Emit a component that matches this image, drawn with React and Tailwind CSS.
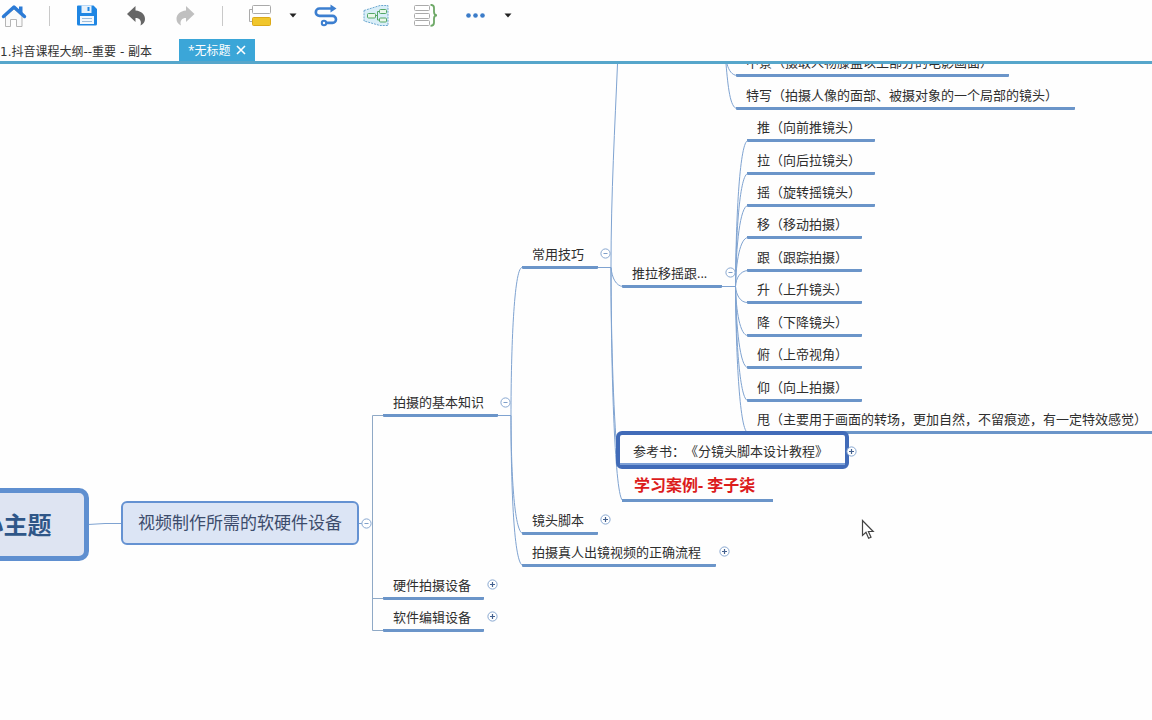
import React from "react";

// Branch nodes: x / line / width describe the underline each label sits on
const nodes = [
  { text: "中景（摄取人物膝盖以上部分的电影画面）", x: 736, line: 11, width: 273 },
  { text: "特写（拍摄人像的面部、被摄对象的一个局部的镜头）", x: 736, line: 44, width: 339 },
  { text: "推（向前推镜头）", x: 747, line: 76, width: 128 },
  { text: "拉（向后拉镜头）", x: 747, line: 109, width: 128 },
  { text: "摇（旋转摇镜头）", x: 747, line: 141, width: 128 },
  { text: "移（移动拍摄）", x: 747, line: 173, width: 115 },
  { text: "跟（跟踪拍摄）", x: 747, line: 206, width: 115 },
  { text: "升（上升镜头）", x: 747, line: 238, width: 115 },
  { text: "降（下降镜头）", x: 747, line: 271, width: 115 },
  { text: "俯（上帝视角）", x: 747, line: 303, width: 115 },
  { text: "仰（向上拍摄）", x: 747, line: 336, width: 115 },
  {
    text: "甩（主要用于画面的转场，更加自然，不留痕迹，有一定特效感觉）",
    x: 747,
    line: 368,
    width: 416,
  },
  { text: "常用技巧", x: 522, line: 203, width: 76 },
  { text: "推拉移摇跟...", x: 622, line: 222, width: 100 },
  { text: "拍摄的基本知识", x: 383, line: 351, width: 115 },
  { text: "镜头脚本", x: 522, line: 469, width: 76 },
  { text: "拍摄真人出镜视频的正确流程", x: 522, line: 501, width: 194 },
  { text: "硬件拍摄设备", x: 383, line: 534, width: 101 },
  { text: "软件编辑设备", x: 383, line: 566, width: 101 },
];

const toggles = [
  { x: 605, y: 189, open: true, label: "常用技巧" },
  { x: 730, y: 208, open: true, label: "推拉移摇跟" },
  { x: 505, y: 338, open: true, label: "拍摄的基本知识" },
  { x: 366, y: 459, open: true, label: "视频制作所需的软硬件设备" },
  { x: 851, y: 387, open: false, label: "参考书" },
  { x: 605, y: 455, open: false, label: "镜头脚本" },
  { x: 724, y: 487, open: false, label: "正确流程" },
  { x: 492, y: 520, open: false, label: "硬件拍摄设备" },
  { x: 492, y: 552, open: false, label: "软件编辑设备" },
];

// Underlines of the children of 推拉移摇跟
const shotLines = [76, 109, 141, 173, 206, 238, 271, 303, 336, 368];

function Node({ text, x, line, width }) {
  return (
    <div
      className="absolute h-[25px] pl-[10px] border-b-[3px] border-[#6b95c9] rounded-b-[1px] text-[13px] leading-5 text-[#2e2e2e] whitespace-nowrap"
      style={{ left: x, top: line - 23, width }}
    >
      {text}
    </div>
  );
}

function Toggle({ x, y, open, label }) {
  return (
    <button
      aria-label={(open ? "收起 " : "展开 ") + label}
      className="absolute size-[11px]"
      style={{ left: x - 5, top: y - 5 }}
    >
      <svg viewBox="0 0 11 11" className="block size-[11px]">
        <circle cx="5.5" cy="5.5" r="4.6" fill="#fff" stroke="#87a7d0" />
        <path
          d={open ? "M3.5 5.5h4" : "M3 5.5h5M5.5 3v5"}
          stroke={open ? "#7f9fc8" : "#44618f"}
          strokeWidth={open ? "1" : "1.2"}
        />
      </svg>
    </button>
  );
}

function Caret({ label }) {
  return (
    <button aria-label={label}>
      <svg width="10" height="24" viewBox="0 0 10 24">
        <path d="M1.5 9.5h7L5 13.5z" fill="#222" />
      </svg>
    </button>
  );
}

function Toolbar() {
  return (
    <div className="flex items-center gap-[25px] h-[39px] pb-[7px]">
      <button aria-label="主页">
        <svg width="24" height="24" viewBox="0 0 24 24" className="overflow-visible">
          <path d="M5.500 12v10.500h5v-7h6v7h5.500V12L14 5z" fill="#fafafa" stroke="#b5b5b5" />
          <path d="M19 2.500h3.500v7H19z" fill="#2c7bd6" />
          <path
            d="M3.500 12.500L14 3l10.500 9.500"
            fill="none"
            stroke="#2c7bd6"
            strokeWidth="3.400"
            strokeLinecap="round"
            strokeLinejoin="round"
          />
        </svg>
      </button>
      <span className="w-px h-5 bg-[#c9c9c9]" />
      <button aria-label="保存">
        <svg width="24" height="24" viewBox="0 0 24 24">
          <path d="M3 1.500h15.500L22 5v15a1.500 1.500 0 0 1-1.500 1.500h-17A1.500 1.500 0 0 1 2 20V2.500a1 1 0 0 1 1-1z" fill="#1f86e3" />
          <path d="M6.500 1.500h10V9h-10z" fill="#e6f1fb" />
          <path d="M12.500 3h2v4h-2z" fill="#1f86e3" />
          <path d="M5 12h14v8H5z" fill="#f3f8fd" />
          <path d="M7 14.500h10M7 17.500h10" stroke="#9dbcd9" />
        </svg>
      </button>
      <button aria-label="撤销">
        <svg width="24" height="24" viewBox="0 0 24 24">
          <path d="M3 10L11.500 2v4.500c6 .5 9.500 4 9.500 8.500 0 3-1.500 5-4.500 6.500 1.500-5-1-7.500-5-7.500v4z" fill="#666" />
        </svg>
      </button>
      <button aria-label="重做">
        <svg width="24" height="24" viewBox="0 0 24 24">
          <path d="M21.500 10L13 2v4.500c-6 .5-9.500 4-9.500 8.500 0 3 1.500 5 4.500 6.500-1.500-5 1-7.500 5-7.500v4z" fill="#c0c0c0" />
        </svg>
      </button>
      <span className="w-px h-5 bg-[#c9c9c9]" />
      <div className="flex items-center gap-4">
        <button aria-label="插入主题">
          <svg width="24" height="24" viewBox="0 0 24 24">
            <path d="M4 5.500H1.500v12H4" fill="none" stroke="#aaa" />
            <rect x="4.500" y="1.500" width="18" height="8" rx="1" fill="#fff" stroke="#aaa" />
            <rect x="4.500" y="13.500" width="18" height="8" rx="1" fill="#f0c62c" stroke="#dca918" />
          </svg>
        </button>
        <Caret label="主题选项" />
        <button aria-label="联系">
          <svg width="24" height="24" viewBox="0 0 24 24">
            <path
              d="M18 4.500H5.500a3.700 3.700 0 0 0 0 7.400h13a3.400 3.400 0 0 1 0 7H12"
              fill="none"
              stroke="#3c7fd0"
              strokeWidth="2.600"
            />
            <path d="M16.500 .5L22.500 4.500l-6 4z" fill="#3c7fd0" />
            <circle cx="10" cy="19" r="2.200" fill="#fff" stroke="#3c7fd0" strokeWidth="2" />
          </svg>
        </button>
      </div>
      <button aria-label="外框">
        <svg width="26" height="24" viewBox="0 0 26 24">
          <path d="M1 6.500L17 1.500h8v20h-8L1 17z" fill="#d9eef8" stroke="#6ba7cf" strokeDasharray="2 1" />
          <path d="M12 11.500h3M14.500 7.500v8.500M14.500 7.500h2M14.500 16h2" stroke="#55a867" fill="none" />
          <rect x="4.500" y="9.500" width="8" height="4.500" rx="1" fill="#e9f7ea" stroke="#55a867" />
          <rect x="16.500" y="5.500" width="7" height="4" rx="1" fill="#e9f7ea" stroke="#55a867" />
          <rect x="16.500" y="14" width="7" height="4" rx="1" fill="#e9f7ea" stroke="#55a867" />
        </svg>
      </button>
      <button aria-label="概要">
        <svg width="24" height="24" viewBox="0 0 24 24">
          <rect x="0.500" y="1.500" width="15" height="5" rx="1" fill="#fff" stroke="#aaa" />
          <rect x="0.500" y="9.500" width="15" height="5" rx="1" fill="#fff" stroke="#aaa" />
          <rect x="0.500" y="16.500" width="15" height="5" rx="1" fill="#fff" stroke="#aaa" />
          <path
            d="M16.500 .8c3 0 3.500 1 3.500 3v4.300c0 2 .8 3.200 3 3.200-2.200 0-3 1.200-3 3.200v4.300c0 2-.5 3-3.500 3"
            fill="none"
            stroke="#6da866"
            strokeWidth="1.800"
          />
        </svg>
      </button>
      <div className="flex items-center gap-3">
        <button aria-label="更多">
          <svg width="28" height="24" viewBox="0 0 28 24">
            <circle cx="5.500" cy="11.500" r="2.300" fill="#3b7cc9" />
            <circle cx="12.500" cy="11.500" r="2.300" fill="#3b7cc9" />
            <circle cx="19.500" cy="11.500" r="2.300" fill="#3b7cc9" />
          </svg>
        </button>
        <Caret label="更多选项" />
      </div>
    </div>
  );
}

function Tabs() {
  return (
    <div className="flex h-[25px] border-b-[3px] border-[#56a6cb] text-[12px] leading-[22px]">
      <button className="w-[179px] text-left whitespace-nowrap text-[#333] pt-0.5 font-['DejaVu_Sans','Noto_Sans_CJK_SC',sans-serif]">
        1.抖音课程大纲--重要 - 副本
      </button>
      <div className="flex items-center justify-between w-[76px] px-[9px] bg-[#3ba6d8] text-white">
        <button className="whitespace-nowrap pt-0.5">*无标题</button>
        <button aria-label="关闭">
          <svg width="10" height="10" viewBox="0 0 10 10">
            <path d="M1 1l8 8M9 1L1 9" stroke="#fff" strokeWidth="1.600" />
          </svg>
        </button>
      </div>
    </div>
  );
}

function Connectors() {
  return (
    <svg className="absolute inset-0 w-full h-full" fill="none" stroke="#7fa3d1">
      {/* Central topic to the main topic and its children */}
      <path d="M88 460.500L105 459.500H122M359 459.500h3" />
      <path d="M383 351.500H372.500V566.500H383M372.500 534.500H383" stroke="#8fa9c6" />

      {/* 拍摄的基本知识 */}
      <path d="M497 351.500H511" />
      <path d="M511 351.500C511 285 514 204 522 203.500" />
      <path d="M511 351.500C511 405 514 469 523 469.500" />
      <path d="M511 351.500C511 425 514 501 523 501.500" />

      {/* 常用技巧 */}
      <path d="M597 203.500H611" />
      <path d="M611 203.500C611 130 615 60 617.500 0" />
      <path d="M611 203.500C612 214 616 222 623 222.500" />
      <path d="M611 203.500C611 280 614 360 618 400" />
      <path d="M611 203.500C611 310 615 436 623 436.500" />

      {/* Children cut off by the top of the canvas */}
      <path d="M727 0C729 7 732 11 737 11.500" />
      <path d="M726 0C728 22 730 44 737 44.500" />

      {/* 推拉移摇跟 */}
      <path d="M722 222.500H735.500" />
      {shotLines.map((y) => (
        <path key={y} d={`M735.500 222.500C736 ${(222 + y) / 2} 740 ${y + 1} 748 ${y + 0.5}`} />
      ))}
    </svg>
  );
}

function App() {
  return (
    <div className="flex flex-col h-screen overflow-hidden bg-[#fefefe] font-['Open_Sans','Noto_Sans_CJK_SC',sans-serif] [text-spacing-trim:space-all]">
      <header className="shrink-0">
        <Toolbar />
        <Tabs />
      </header>

      <main className="relative flex-1 overflow-hidden">
        <Connectors />

        {nodes.map((node) => (
          <Node key={node.text} {...node} />
        ))}

        {/* Central topic */}
        <div className="absolute left-[-82px] top-[424px] w-[171px] h-[73px] flex items-center justify-center border-[5px] border-[#5f8fd0] rounded-[10px] bg-[#dee4f2] text-2xl font-bold text-[#2f5688] whitespace-nowrap">
          中心主题
        </div>

        {/* Main topic */}
        <div className="absolute left-[121px] top-[437px] w-[238px] h-[44px] flex items-center justify-center border-2 border-[#6592d2] rounded-md bg-[#dce5f5] text-[17px] text-[#3c4c6c] whitespace-nowrap">
          视频制作所需的软硬件设备
        </div>

        {/* Selected node */}
        <div className="absolute left-[616px] top-[367px] w-[233px] h-[38px] border-4 border-[#416bb8] rounded-md bg-[#fefefe]">
          <div className="h-[30px] pl-[13px] border-b-2 border-[#7c9fd6] text-[13px] leading-8 text-[#2e2e2e] whitespace-nowrap">
            参考书：《分镜头脚本设计教程》
          </div>
        </div>

        <div className="absolute left-[622px] top-[409px] w-[151px] h-[29px] pl-[12px] border-b-[3px] border-[#6b95c9] text-[16px] leading-6 font-bold text-[#dc1c1c] whitespace-nowrap">
          学习案例- 李子柒
        </div>

        {toggles.map((toggle) => (
          <Toggle key={toggle.label} {...toggle} />
        ))}

        {/* Mouse pointer */}
        <svg className="absolute left-[861px] top-[455px]" width="14" height="21" viewBox="0 0 14 21">
          <path
            d="M1.500 1.500v15l3.500-3.200 2.600 6 2.400-1.100-2.600-5.700h4.800z"
            fill="#fff"
            stroke="#444"
            strokeWidth="1.200"
          />
        </svg>
      </main>
    </div>
  );
}

export default App;
